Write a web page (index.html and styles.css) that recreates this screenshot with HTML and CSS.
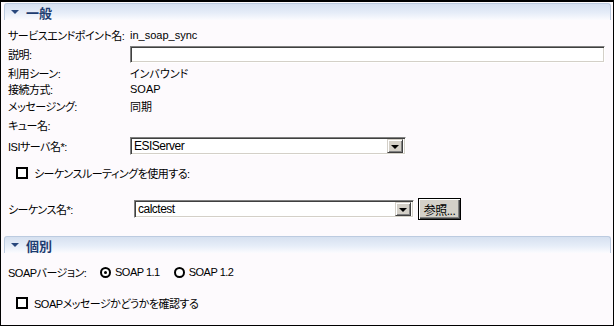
FILE: index.html
```html
<!DOCTYPE html>
<html lang="ja">
<head>
    <meta charset="UTF-8">
    <title>サービスエンドポイント</title>
    <link rel="stylesheet" href="styles.css">
</head>
<body>
    <div class="frame">
        <!-- 一般 -->
        <div class="section-head">
            <span class="twisty"></span>
            <span class="section-title">一般</span>
        </div>

        <div class="row r1">
            <span class="label">サービスエンドポイント名:</span>
            <span class="value">in_soap_sync</span>
        </div>
        <div class="row r2">
            <span class="label">説明:</span>
            <span class="text-input"></span>
        </div>
        <div class="row r3">
            <span class="label">利用シーン:</span>
            <span class="value">インバウンド</span>
        </div>
        <div class="row r4">
            <span class="label">接続方式:</span>
            <span class="value">SOAP</span>
        </div>
        <div class="row r5">
            <span class="label">メッセージング:</span>
            <span class="value">同期</span>
        </div>
        <div class="row r6">
            <span class="label">キュー名:</span>
        </div>
        <div class="row r7">
            <span class="label">ISIサーバ名*:</span>
            <span class="combo combo-isi">
                <span class="combo-text">ESIServer</span>
                <span class="combo-btn"><span class="arrow"></span></span>
            </span>
        </div>
        <div class="row r8 check-row">
            <span class="checkbox"></span>
            <span>シーケンスルーティングを使用する:</span>
        </div>
        <div class="row r9">
            <span class="label">シーケンス名*:</span>
            <span class="combo combo-seq">
                <span class="combo-text">calctest</span>
                <span class="combo-btn"><span class="arrow"></span></span>
            </span>
            <span class="push-btn"><span>参照...</span></span>
        </div>

        <!-- 個別 -->
        <div class="section-head second">
            <span class="twisty"></span>
            <span class="section-title">個別</span>
        </div>

        <div class="row r10">
            <span class="label short">SOAPバージョン:</span>
            <span class="radio checked"></span>
            <span class="radio-label">SOAP 1.1</span>
            <span class="radio"></span>
            <span class="radio-label">SOAP 1.2</span>
        </div>
        <div class="row r11 check-row">
            <span class="checkbox"></span>
            <span>SOAPメッセージかどうかを確認する</span>
        </div>
    </div>
</body>
</html>
```

FILE: styles.css
```css
body {
    margin: 0;
    background: #ffffff;
}
.frame {
    box-sizing: border-box;
    width: 614px;
    height: 326px;
    border: 1px solid #000;
    border-top-width: 2px;
    background: #fdfafd;
    font-family: "Liberation Sans", "Noto Sans CJK JP", sans-serif;
    font-size: 11px;
    letter-spacing: -0.5px;
    font-feature-settings: "palt";
    color: #000;
    padding-top: 1px;
    overflow: hidden;
}

/* section header bars */
.section-head {
    box-sizing: border-box;
    height: 17px;
    margin: 0 2px 0 3px;
    border: 1px solid #bccbe0;
    border-bottom: none;
    border-radius: 3px 3px 0 0;
    background: linear-gradient(#d6e0f0, #e6edf8 55%, #fbfbfe);
    display: flex;
    align-items: center;
}
.section-head.second {
    margin-top: 16px;
}
.twisty {
    width: 0;
    height: 0;
    margin-left: 6px;
    border-left: 4px solid transparent;
    border-right: 4px solid transparent;
    border-top: 4px solid #28477c;
}
.section-title {
    margin-left: 7px;
    font-family: "Noto Sans CJK JP", sans-serif;
    font-size: 13px;
    font-weight: bold;
    letter-spacing: 0;
    color: #1d3c70;
    line-height: 15px;
}

/* rows */
.row {
    display: flex;
    align-items: center;
    height: 16px;
    padding-left: 7px;
    white-space: nowrap;
}
.label {
    width: 122px;
    flex: none;
}
.label.short {
    width: 92px;
}
.value {
    letter-spacing: 0;
}
.r1 { margin-top: 7px; }
.r2 { margin-top: 2px; height: 18px; }
.r3 { margin-top: 2px; }
.r4 { margin-top: 0; }
.r5 { margin-top: 1px; }
.r6 { margin-top: 3px; }
.r7 { margin-top: 4px; height: 18px; }
.r8 { margin-top: 10px; }
.r9 { margin-top: 17px; height: 22px; }
.r10 { margin-top: 11px; }
.r11 { margin-top: 15px; }

/* sunken inputs */
.text-input,
.combo {
    box-sizing: border-box;
    display: flex;
    align-items: center;
    height: 17px;
    border-style: solid;
    border-width: 1px;
    border-color: #808080 #ffffff #ffffff #808080;
    box-shadow: inset 1px 1px #404040, inset -1px -1px #d4d0c8;
    background: #fff;
}
.text-input {
    width: 475px;
}
.combo {
    height: 18px;
    padding: 2px;
}
.combo-isi {
    width: 276px;
}
.combo-seq {
    width: 280px;
    margin-left: 4px;
}
.combo-text {
    flex: 1;
    padding-left: 1px;
    line-height: 14px;
    font-size: 12px;
}
.combo-btn {
    box-sizing: border-box;
    width: 16px;
    height: 14px;
    background: #d4d0c8;
    border-style: solid;
    border-width: 1px;
    border-color: #d4d0c8 #404040 #404040 #d4d0c8;
    box-shadow: inset 1px 1px #fff, inset -1px -1px #808080;
    display: flex;
    align-items: center;
    justify-content: center;
}
.arrow {
    width: 0;
    height: 0;
    border-left: 4px solid transparent;
    border-right: 4px solid transparent;
    border-top: 4px solid #000;
    margin-top: 1px;
}

/* push button */
.push-btn {
    box-sizing: border-box;
    width: 43px;
    height: 22px;
    margin-left: 4px;
    border: 1px solid #000;
    background: #d4d0c8;
    box-shadow: inset 1px 1px #fff, inset -1px -1px #404040, inset -2px -2px #808080;
    display: flex;
    align-items: center;
    justify-content: center;
    font-size: 12px;
}

/* checkbox and radio */
.check-row {
    padding-left: 15px;
}
.checkbox {
    box-sizing: border-box;
    width: 12px;
    height: 12px;
    border: 2px solid #000;
    background: #fff;
    margin-right: 6px;
    flex: none;
}
.radio {
    box-sizing: border-box;
    width: 11px;
    height: 11px;
    border: 2px solid #000;
    border-radius: 50%;
    background: #fff;
    margin-right: 4px;
    flex: none;
    display: flex;
    align-items: center;
    justify-content: center;
}
.radio.checked::after {
    content: "";
    width: 3px;
    height: 3px;
    border-radius: 50%;
    background: #000;
}
.radio-label {
    margin-right: 14px;
}
```
